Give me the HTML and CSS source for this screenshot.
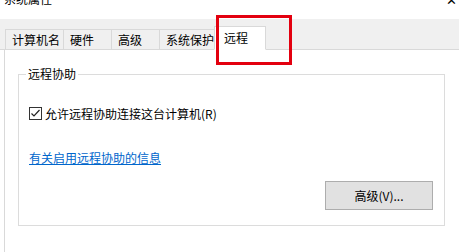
FILE: index.html
```html
<!DOCTYPE html>
<html>
<head>
  <title>系统属性</title>
  <link rel="stylesheet" href="styles.css">
</head>
<body>
    <div class="titlebar">
        <span class="title">系统属性</span>
        <span class="close">✕</span>
    </div>
    <div class="tabs">
        <div class="tab tab-name">计算机名</div>
        <div class="tab tab-hw">硬件</div>
        <div class="tab tab-adv">高级</div>
        <div class="tab tab-prot">系统保护</div>
        <div class="tab tab-remote selected">远程</div>
    </div>
    <div class="page">
        <fieldset class="group">
            <legend>远程协助</legend>
            <label class="check-row">
                <span class="checkbox">
                    <svg width="11" height="11" viewBox="0 0 11 11"><path d="M1.5 5.5 L4 8 L9.5 2" fill="none" stroke="#222" stroke-width="1.2"/></svg>
                </span>
                允许远程协助连接这台计算机(R)
            </label>
            <a class="info-link" href="#">有关启用远程协助的信息</a>
            <div class="btn-row">
                <button class="adv-btn">高级(V)...</button>
            </div>
        </fieldset>
    </div>
    <div class="highlight"></div>
</body>
</html>
```

FILE: styles.css
```css
/* System properties dialog, remote tab */
body {
  margin: 0;
  background-color: #fff;
  font-family: "Microsoft YaHei UI", "Noto Sans CJK SC", sans-serif;
  font-size: 12px;
  color: #000;
  width: 459px;
  height: 252px;
  overflow: hidden;
  position: relative;
}
.titlebar {
  height: 19px;
  display: flex;
  justify-content: space-between;
  align-items: flex-start;
  overflow: hidden;
}
.title {
  margin-top: -9px;
  margin-left: 4px;
  line-height: 16px;
  color: #000;
}
.close {
  margin-top: -8px;
  margin-right: 2px;
  font-size: 13px;
  line-height: 16px;
}
.tabs {
  height: 31px;
  box-sizing: border-box;
  background-color: #f0f0f0;
  border-bottom: 1px solid #d9d9d9;
  display: flex;
  align-items: flex-end;
  padding-left: 5px;
}
.tab {
  height: 21px;
  box-sizing: border-box;
  border: 1px solid #d9d9d9;
  border-bottom: none;
  border-left: none;
  padding-left: 6px;
  line-height: 19px;
  margin-bottom: -1px;
  border-bottom: 1px solid #d9d9d9;
}
.tab-name { width: 59px; border-left: 1px solid #d9d9d9; }
.tab-hw { width: 48px; }
.tab-adv { width: 48px; }
.tab-prot { width: 56px; }
.tab.selected {
  width: 52px;
  height: 24px;
  margin-left: -2px;
  padding-left: 9px;
  line-height: 22px;
  background-color: #fff;
  border: 1px solid #d9d9d9;
  border-bottom: 1px solid #fff;
}
.page {
  padding: 16px 0 0 18px;
  border-left: 1px solid #d9d9d9;
  margin-left: 4px;
  height: 202px;
  box-sizing: border-box;
  padding-left: 13px;
}
.group {
  width: 427px;
  height: 160px;
  box-sizing: border-box;
  margin: 0;
  border: 1px solid #dcdcdc;
  padding: 0 11px 15px 10px;
  display: flex;
  flex-direction: column;
}
.group legend {
  padding: 0 2px;
  margin-left: -3px;
  line-height: 16px;
}
.check-row {
  display: flex;
  align-items: center;
  margin-top: 24px;
  height: 14px;
}
.checkbox {
  width: 11px;
  height: 11px;
  border: 1px solid #333;
  margin-right: 3px;
  display: flex;
}
.info-link {
  margin-top: 31px;
  color: #0066cc;
  text-decoration: underline;
  line-height: 14px;
  align-self: flex-start;
}
.btn-row {
  margin-top: auto;
  display: flex;
  justify-content: flex-end;
}
.adv-btn {
  width: 108px;
  height: 29px;
  background-color: #e1e1e1;
  border: 1px solid #adadad;
  font-family: inherit;
  font-size: 12px;
  color: #000;
  padding: 0;
}
.highlight {
  position: absolute;
  left: 216px;
  top: 15px;
  width: 76px;
  height: 50px;
  box-sizing: border-box;
  border: 3px solid #e3000f;
}
```
